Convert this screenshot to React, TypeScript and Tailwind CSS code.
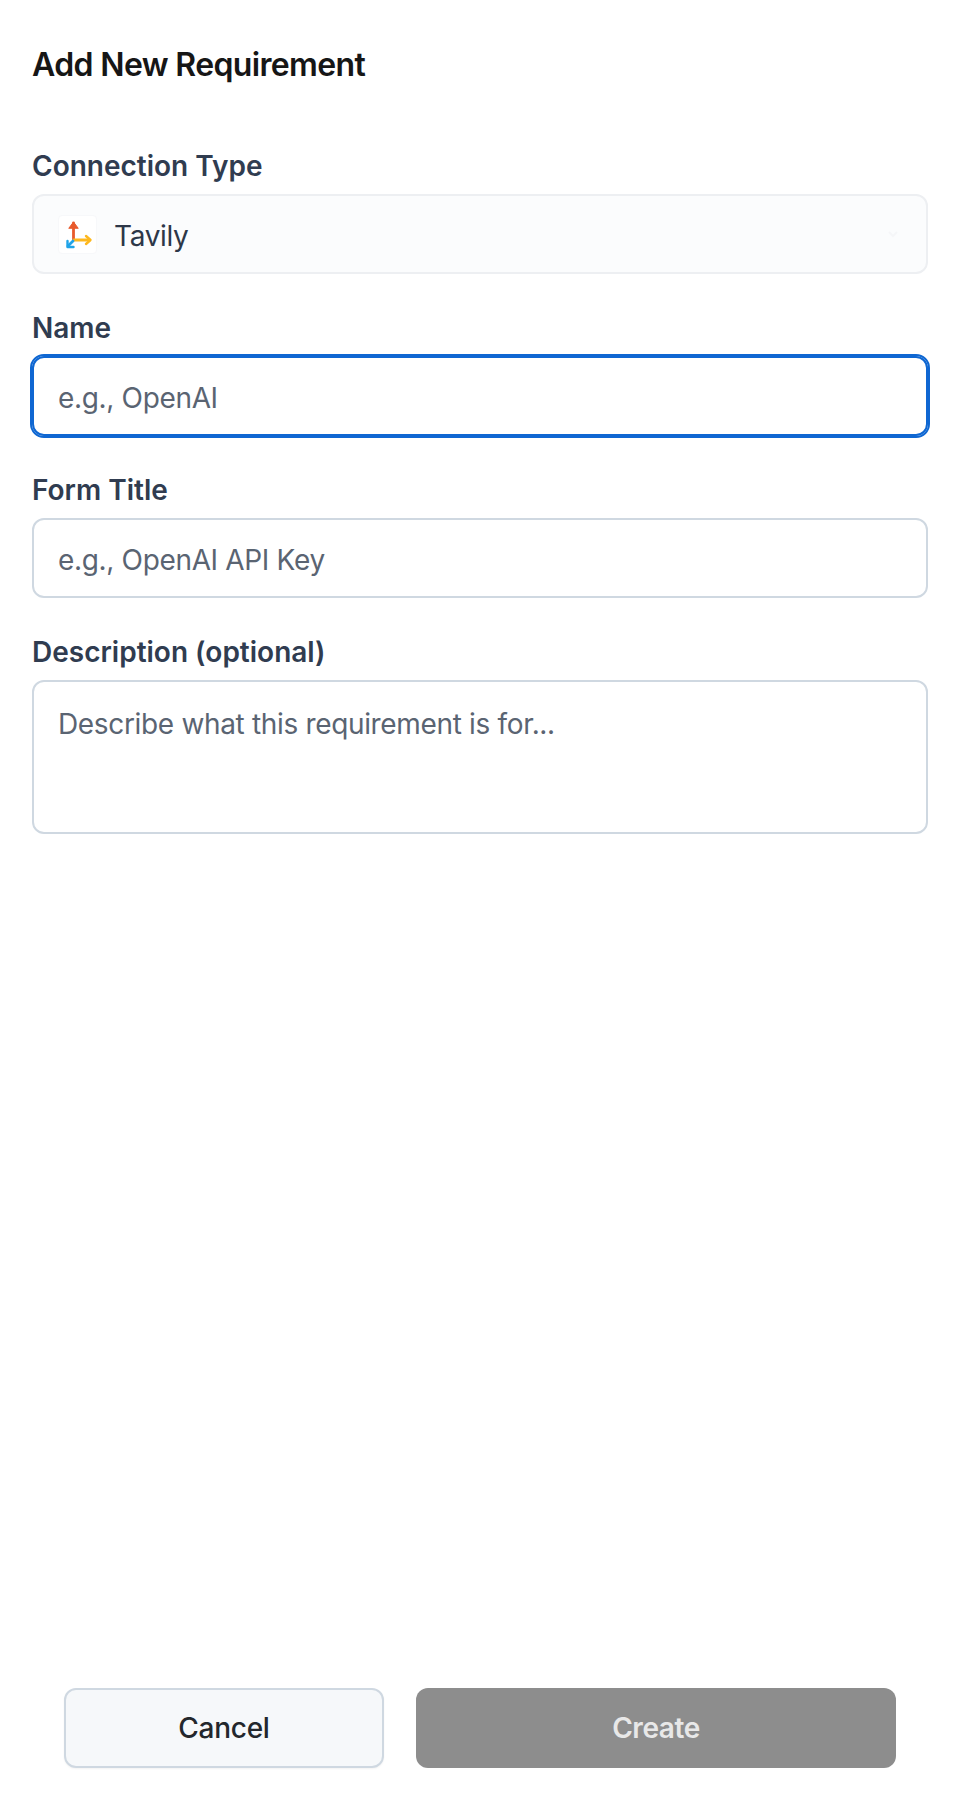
import React from "react";

function Label({ children }: { children: React.ReactNode }) {
  return <label className="block h-8 mb-3 text-[28px] leading-8 font-semibold text-[#303c50]">{children}</label>;
}

function TavilyLogo() {
  return (
    <span className="flex items-center justify-center w-[39px] h-[39px] bg-white rounded-[4px] shrink-0 border border-[#f7f8fa]">
      <svg width="39" height="39" viewBox="0 0 39 39" fill="none" strokeLinecap="round" strokeLinejoin="round" className="shrink-0">
        <path d="M15.500 25V8" stroke="#e85a2c" strokeWidth="2.800" />
        <path d="M11 13 15.500 7 20 13Z" fill="#e85a2c" stroke="#e85a2c" strokeWidth="1" />
        <path d="M16 25H31" stroke="#fdb81e" strokeWidth="2.800" />
        <path d="M28 21l4.500 4-4.500 4" stroke="#fdb81e" strokeWidth="2.400" />
        <path d="M15 26l-5 5" stroke="#20a4e8" strokeWidth="2.800" />
        <path d="M9.500 26v6h6" stroke="#20a4e8" strokeWidth="2.400" />
      </svg>
    </span>
  );
}

export default function App() {
  return (
    <div className="flex flex-col h-[1800px] bg-white px-8 font-['Inter',sans-serif]">
      <h1 className="pt-[45px] mb-[65px] text-[32px] leading-10 font-semibold text-[#161616] tracking-[-0.02em]">Add New Requirement</h1>

      <div>
        <Label>Connection Type</Label>
        <div className="flex items-center h-20 pl-6 pr-[26px] gap-[17px] bg-[#fbfcfd] border-2 border-[#edeff2] rounded-xl">
          <TavilyLogo />
          <span className="flex-1 pt-1 text-[28px] text-[#2d3748] tracking-[-0.012em]">Tavily</span>
          <svg width="14" height="14" viewBox="0 0 14 14" fill="none" stroke="#f5f6f8" strokeWidth="2">
            <path d="M3 5l4 4 4-4" />
          </svg>
        </div>
      </div>

      <div className="mt-[38px]">
        <Label>Name</Label>
        <input
          placeholder="e.g., OpenAI"
          className="block w-full h-20 px-6 pt-1 bg-white border-2 border-[#0f67d2] outline-2 outline-[#0f67d2] rounded-xl text-[28px] tracking-[-0.012em] placeholder:text-[#5a6472]"
        />
      </div>

      <div className="mt-[38px]">
        <Label>Form Title</Label>
        <input
          placeholder="e.g., OpenAI API Key"
          className="block w-full h-20 px-6 pt-1 bg-white border-2 border-[#cfd8e1] rounded-xl text-[28px] tracking-[-0.012em] placeholder:text-[#5a6472]"
        />
      </div>

      <div className="mt-[38px]">
        <Label>Description (optional)</Label>
        <textarea
          placeholder="Describe what this requirement is for..."
          className="block w-full h-[154px] px-6 py-[22px] bg-white border-2 border-[#cfd8e1] rounded-xl text-[28px] leading-10 tracking-[-0.012em] resize-none placeholder:text-[#5a6472]"
        />
      </div>

      <div className="mt-auto mb-[32px] flex gap-8 px-8">
        <button className="w-[320px] h-20 bg-[#f6f8fa] border-2 border-[#cfd8e1] rounded-xl shadow-[0_1px_2px_rgba(0,0,0,0.05)] text-[28px] font-medium text-[#23272c] tracking-[-0.01em]">Cancel</button>
        <button className="flex-1 h-20 bg-[#8d8d8d] rounded-xl text-[28px] font-semibold text-[#e8e8e8] tracking-[-0.015em]">Create</button>
      </div>
    </div>
  );
}
